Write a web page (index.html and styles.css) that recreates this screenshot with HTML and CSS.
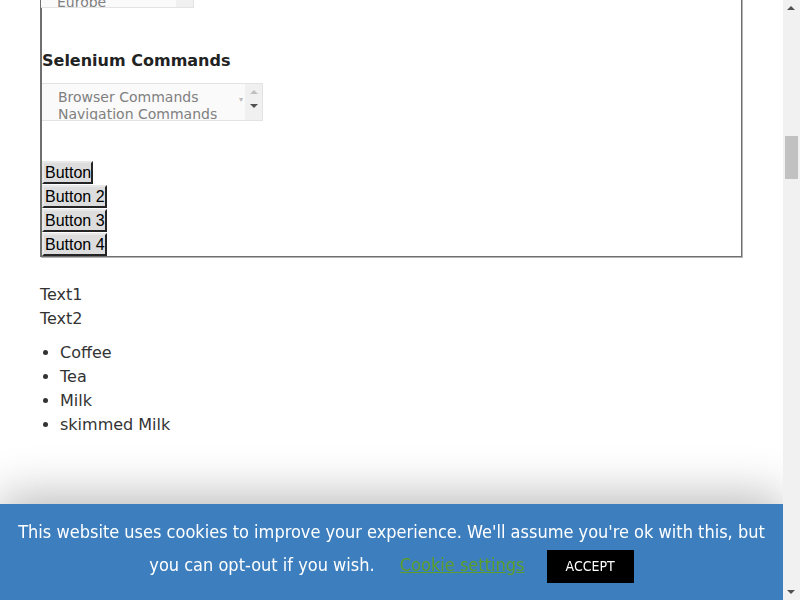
FILE: index.html
```html
<!DOCTYPE html>
<html>
<head>
<meta charset="utf-8">
<link rel="stylesheet" href="styles.css">
</head>
<body>
<div class="page">
  <div class="frame">
    <div class="select-europe">
      <div class="opts"><div class="opt">Asia</div><div class="opt">Europe</div></div>
      <div class="sb"></div>
    </div>
    <h3 class="heading">Selenium Commands</h3>
    <div class="listbox">
      <div class="opts">
        <div class="opt">Browser Commands</div>
        <div class="opt">Navigation Commands</div>
      </div>
      <div class="caret">&#9662;</div>
      <div class="sb2">
        <span class="arr up"></span>
        <span class="arr down"></span>
      </div>
    </div>
    <div class="buttons">
      <button class="btn">Button</button>
      <button class="btn">Button 2</button>
      <button class="btn">Button 3</button>
      <button class="btn">Button 4</button>
    </div>
  </div>
  <div class="texts">
    <div>Text1</div>
    <div>Text2</div>
  </div>
  <ul class="list">
    <li>Coffee</li>
    <li>Tea</li>
    <li>Milk</li>
    <li>skimmed Milk</li>
  </ul>
</div>

<div class="cookie">
  <span>This website uses cookies to improve your experience. We'll assume you're ok with this, but you can opt-out if you wish.</span>
  <a class="settings" href="#">Cookie settings</a>
  <span class="accept">ACCEPT</span>
</div>

<div class="vscroll">
  <span class="sarr sup"></span>
  <div class="thumb"></div>
  <span class="sarr sdown"></span>
</div>
</body>
</html>
```

FILE: styles.css
```css
html, body {
  margin: 0;
  padding: 0;
  height: 100%;
  overflow: hidden;
  background: #fff;
}
body {
  font-family: "DejaVu Sans", Verdana, sans-serif;
  color: #333;
  font-size: 16px;
}
.page {
  width: 743px;
  padding-left: 40px;
  margin-top: -40px;
}
.frame {
  width: 699px;
  border-left: 2px solid #6f6f6f;
  border-bottom: 1px solid #6f6f6f;
  border-right: 1px solid #6f6f6f;
  box-shadow: 1px 1px 0 #b4b4b4;
  height: 296px;
  box-sizing: content-box;
}
.select-europe {
  display: flex;
  width: 152px;
  height: 46px;
  background: #fafafa;
  border: 1px solid #e3e3e3;
  border-left: none;
  margin-left: -1px;
  font-size: 14px;
  color: #808080;
  overflow: hidden;
}
.select-europe .opts {
  flex: 1;
  padding: 16px 0 0 16px;
  line-height: 17px;
}
.select-europe .sb {
  width: 17px;
  background: #f0f0f0;
}
.heading {
  margin: 43px 0 12px 0;
  font-size: 16px;
  font-weight: bold;
  color: #222;
  line-height: 20px;
}
.listbox {
  display: flex;
  width: 220px;
  height: 36px;
  background: #fafafa;
  border: 1px solid #e3e3e3;
  border-left: none;
  font-size: 14px;
  color: #808080;
  overflow: hidden;
}
.listbox .opts {
  flex: 1;
  padding: 5px 0 0 16px;
  line-height: 17px;
  white-space: nowrap;
}
.caret {
  width: 6px;
  font-size: 8px;
  color: #bbb;
  padding-top: 12px;
  line-height: 8px;
}
.sb2 {
  width: 17px;
  background: #f0f0f0;
  display: flex;
  flex-direction: column;
  align-items: center;
}
.arr {
  width: 0;
  height: 0;
  border-left: 4px solid transparent;
  border-right: 4px solid transparent;
}
.arr.up {
  margin-top: 6px;
  border-bottom: 4px solid #c0c0c0;
}
.arr.down {
  margin-top: 10px;
  border-top: 4px solid #505050;
}
.buttons {
  margin-top: 40px;
  display: flex;
  flex-direction: column;
  align-items: flex-start;
}
.btn {
  font-family: "Liberation Sans", Arial, sans-serif;
  font-size: 16px;
  color: #000;
  background: #dddddd;
  border: 2px outset #9a9a9a;
  border-top-color: #e8e8e8;
  border-left-color: #e8e8e8;
  border-right-color: #7a7a7a;
  border-bottom-color: #7a7a7a;
  padding: 1px 0 0 1px;
  height: 23px;
  line-height: 18px;
  margin: 0 0 1px 0;
  border-radius: 0;
}
.texts {
  margin-top: 26px;
  line-height: 24px;
}
.list {
  margin: 10px 0 0 0;
  padding-left: 20px;
  line-height: 24px;
}
.cookie {
  position: fixed;
  left: 0;
  bottom: 0;
  width: 783px;
  height: 96px;
  box-sizing: border-box;
  background: #3d7fbe;
  color: #fff;
  text-align: center;
  padding: 11px 10px 0 10px;
  font-family: "DejaVu Sans Condensed", "DejaVu Sans", sans-serif;
  font-size: 18px;
  line-height: 33px;
  box-shadow: 0 -8px 48px rgba(0, 0, 0, 0.28);
}
.settings {
  color: #5d9e2b;
  margin-left: 20px;
  text-decoration: underline;
}
.accept {
  display: inline-block;
  background: #000;
  color: #fff;
  font-size: 14px;
  width: 87px;
  height: 33px;
  line-height: 33px;
  margin-left: 17px;
  vertical-align: middle;
}
.vscroll {
  position: fixed;
  right: 0;
  top: 0;
  width: 17px;
  height: 600px;
  background: #f1f1f1;
}
.sarr {
  position: absolute;
  left: 4px;
  width: 0;
  height: 0;
  border-left: 4px solid transparent;
  border-right: 4px solid transparent;
}
.sup {
  top: 6px;
  border-bottom: 4px solid #505050;
}
.sdown {
  bottom: 6px;
  border-top: 4px solid #505050;
}
.thumb {
  position: absolute;
  left: 2px;
  top: 136px;
  width: 13px;
  height: 43px;
  background: #c1c1c1;
}
```
